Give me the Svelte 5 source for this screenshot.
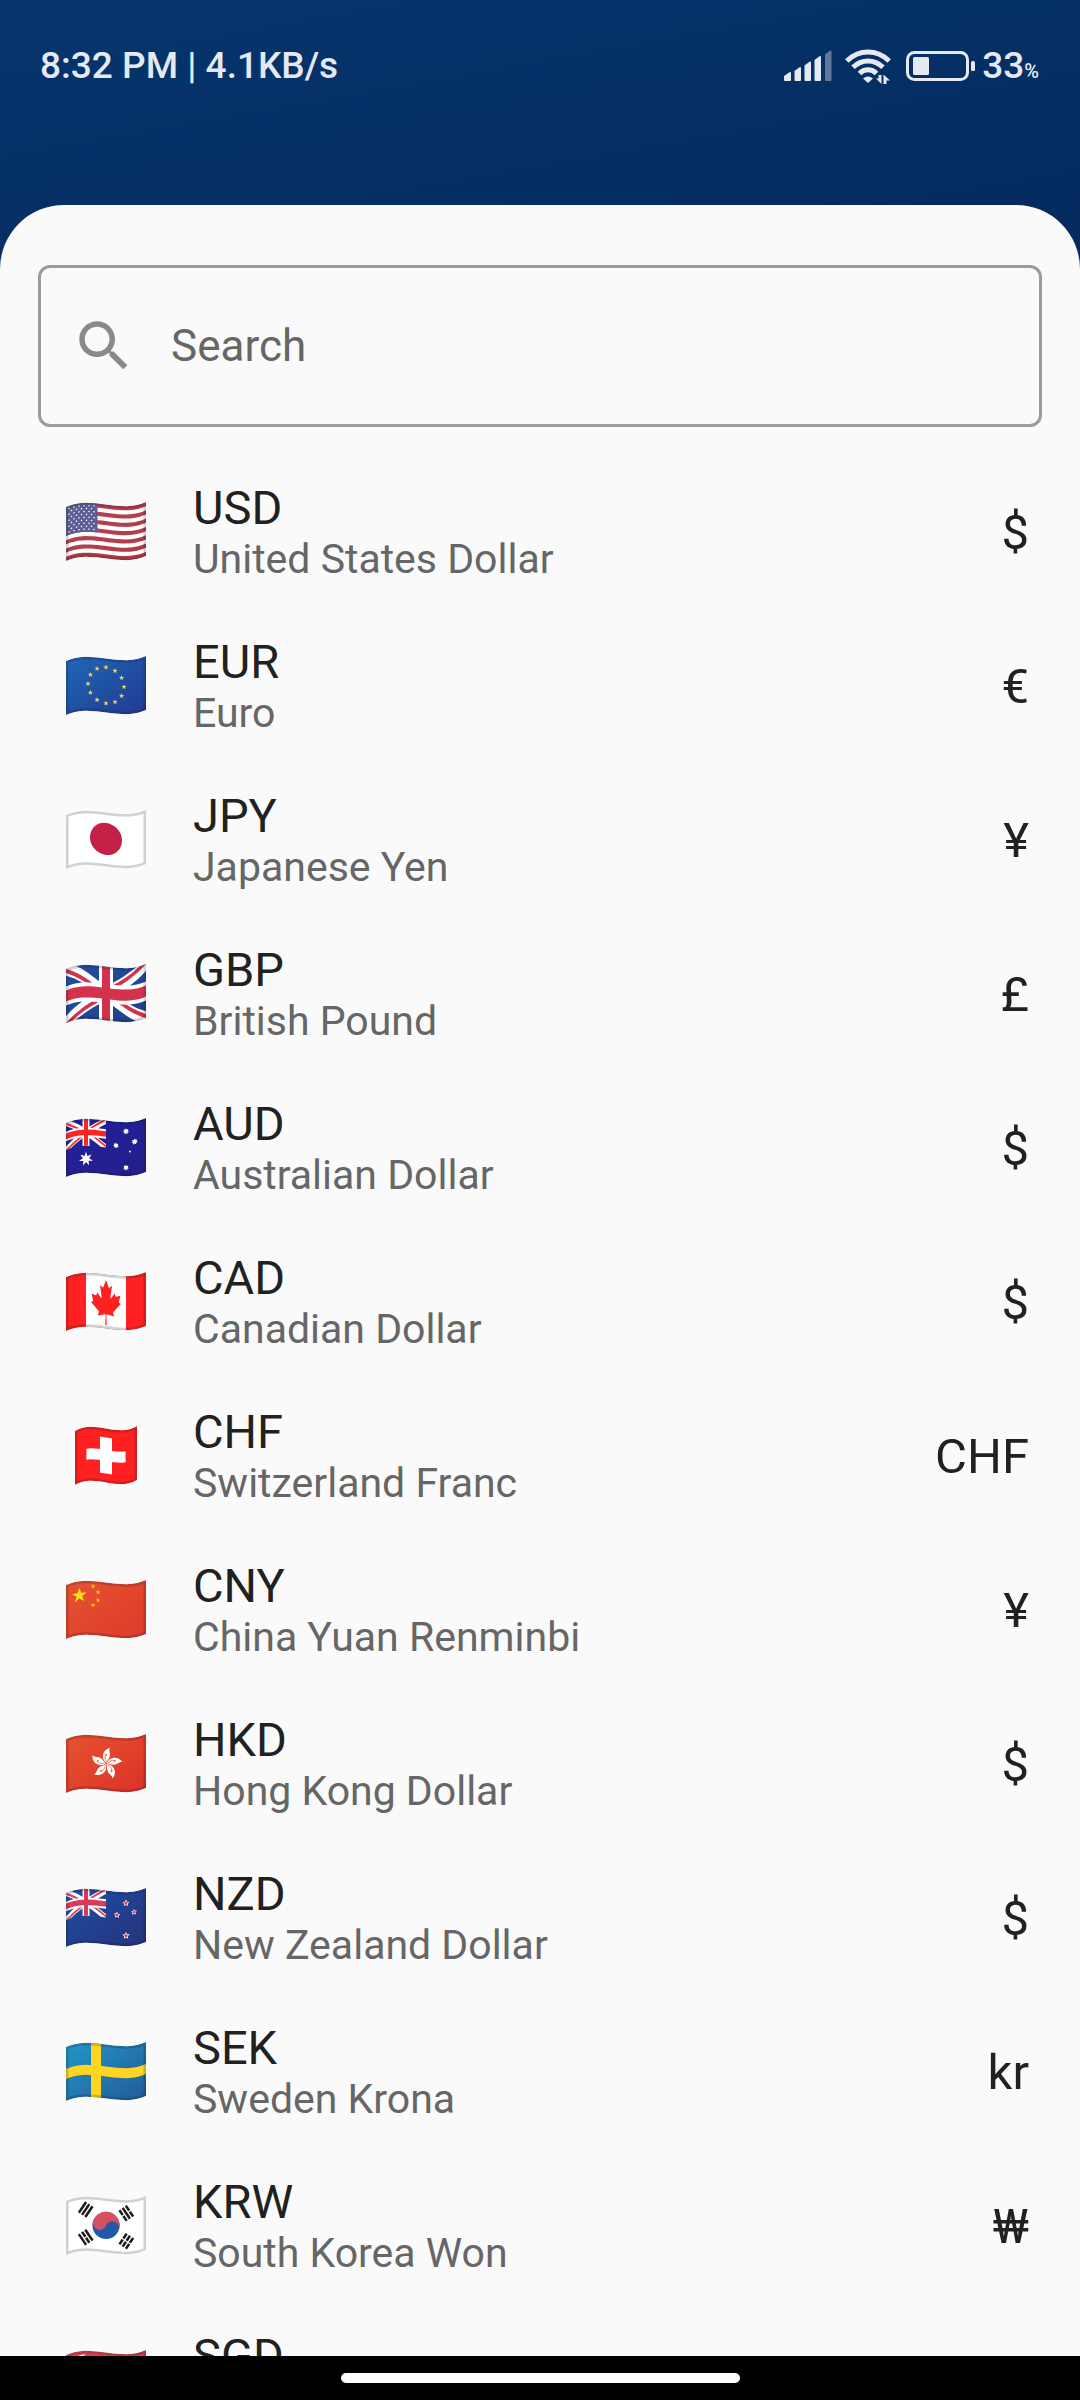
<script>
  const W = 80;
  const H = 54;

  let query = $state('');

  // Height of the cloth's ripple at a share t (0..1) of the flag's width.
  const ripple = (t) => {
    const s = 1 - t;
    return 5 * s * s * s - 21 * s * s * t + 36 * s * t * t;
  };

  // Turns a flat polygon into an outline that follows the ripple.
  function wave(points, left = 0, width = W) {
    const out = [];
    points.forEach(([x1, y1], i) => {
      const [x2, y2] = points[(i + 1) % points.length];
      const steps = Math.max(1, Math.ceil(Math.abs(x2 - x1) / 4));
      for (let k = 0; k < steps; k++) {
        const x = x1 + ((x2 - x1) * k) / steps;
        const y = y1 + ((y2 - y1) * k) / steps;
        const t = Math.min(1, Math.max(0, (x - left) / width));
        out.push(`${x.toFixed(2)},${(y + ripple(t)).toFixed(2)}`);
      }
    });
    return out.join(' ');
  }

  const rect = (x, y, w, h) => [[x, y], [x + w, y], [x + w, y + h], [x, y + h]];

  function star(cx, cy, r, n = 5, inner = 0.4) {
    const pts = [];
    for (let i = 0; i < n * 2; i++) {
      const a = (Math.PI * i) / n - Math.PI / 2;
      const q = i % 2 ? r * inner : r;
      pts.push([cx + q * Math.cos(a), cy + q * Math.sin(a)]);
    }
    return pts;
  }

  const disc = (cx, cy, r) => star(cx, cy, r, 24, 1);
  const shape = (points, fill) => ({ d: wave(points), fill });

  // A band beside the line a-b, between two distances from it.
  function band(a, b, from, to) {
    const dx = b[0] - a[0];
    const dy = b[1] - a[1];
    const len = Math.hypot(dx, dy);
    const nx = -dy / len;
    const ny = dx / len;
    return [
      [a[0] + nx * from, a[1] + ny * from],
      [b[0] + nx * from, b[1] + ny * from],
      [b[0] + nx * to, b[1] + ny * to],
      [a[0] + nx * to, a[1] + ny * to]
    ];
  }

  function unionJack(w, h, red) {
    const c = [w / 2, h / 2];
    const k = h / 54;
    return [
      shape(band([0, 0], [w, h], -5.6 * k, 5.6 * k), '#fff'),
      shape(band([w, 0], [0, h], -5.6 * k, 5.6 * k), '#fff'),
      shape(band([0, 0], c, 0, 3.6 * k), red),
      shape(band([w, h], c, 0, 3.6 * k), red),
      shape(band([w, 0], c, 0, 3.6 * k), red),
      shape(band([0, h], c, 0, 3.6 * k), red),
      shape(rect(w / 2 - 7 * k, 0, 14 * k, h), '#fff'),
      shape(rect(0, h / 2 - 9.5 * k, w, 19 * k), '#fff'),
      shape(rect(w / 2 - 4 * k, 0, 8 * k, h), red),
      shape(rect(0, h / 2 - 5.6 * k, w, 11.2 * k), red)
    ];
  }

  const stripes = Array.from({ length: 6 }, (_, i) =>
    shape(rect(0, (H / 13) * (2 * i + 1), W, H / 13), '#fff')
  );
  const usStars = [];
  for (let r = 0; r < 9; r++) {
    for (let c = 0; c < (r % 2 ? 5 : 6); c++) {
      usStars.push(shape(disc(3 + c * 5 + (r % 2 ? 2.5 : 0), 2.7 + r * 2.95, 0.75), '#fff'));
    }
  }
  const euStars = Array.from({ length: 12 }, (_, i) => {
    const a = (Math.PI * i) / 6;
    return shape(star(40 + 18 * Math.sin(a), 26.8 - 18 * Math.cos(a), 2.8), '#f4d35e');
  });

  const flags = {
    us: { base: ['#b84152', '#b03a4a'], shapes: [...stripes, shape(rect(0, 0, 31.5, 29), '#5d5f94'), ...usStars] },
    eu: { base: ['#1f68b8', '#21398f'], shapes: euStars },
    jp: { base: ['#fff', '#fff'], shapes: [shape(disc(40, 26.4, 16), '#c52148')] },
    gb: { base: ['#1f4fa0', '#223f8c'], shapes: unionJack(W, H, '#d4324c') },
    au: {
      base: ['#22209c', '#241f8a'],
      canton: unionJack(40, 27, '#ff2424'),
      shapes: [
        shape(star(20, 40, 7.2, 7, 0.45), '#fff'),
        shape(star(60, 9.2, 3.2, 7, 0.6), '#fff'),
        shape(star(50, 23.8, 3, 7, 0.6), '#fff'),
        shape(star(68.7, 20.3, 3.2, 7, 0.6), '#fff'),
        shape(star(64, 29.5, 1.6), '#fff'),
        shape(star(60, 45.5, 3, 7, 0.6), '#fff')
      ]
    },
    ca: { base: ['#ff2121', '#ff2121'], shapes: [shape(rect(20, 0, 40, H), '#fff')] },
    ch: {
      base: ['#ff2121', '#ff2121'],
      narrow: true,
      shapes: [
        { d: wave(rect(34, 9, 12, 36), 9, 62), fill: '#fff' },
        { d: wave(rect(20.4, 21.5, 39.2, 11), 9, 62), fill: '#fff' }
      ]
    },
    cn: {
      base: ['#e6532f', '#dc3a2b'],
      shapes: [
        shape(star(13.4, 14, 7.6), '#ffde17'),
        shape(star(27, 5.2, 2.6), '#ffc41a'),
        shape(star(32, 10.7, 2.6), '#ffc41a'),
        shape(star(32, 18.7, 2.6), '#ffc41a'),
        shape(star(27, 24, 2.6), '#ffc41a')
      ]
    },
    hk: { base: ['#e6532f', '#dc3128'], shapes: [] },
    nz: {
      base: ['#1f4fa6', '#25327a'],
      canton: unionJack(40, 27, '#d93a58'),
      shapes: [[60, 11, 3.6], [51, 23.2, 3.4], [68, 20.6, 3.2], [60, 43.5, 3.8]].flatMap(([x, y, r]) => [
        shape(star(x, y, r, 5, 0.5), '#fff'),
        shape(star(x, y, r * 0.7), '#d4324c')
      ])
    },
    se: {
      base: ['#2196c9', '#235a94'],
      shapes: [shape(rect(25, 0, 10, H), '#ffd521'), shape(rect(0, 22, W, 10), '#ffd521')]
    },
    kr: { base: ['#fff', '#fff'], shapes: [] },
    sg: {
      base: ['#df4354', '#d23246'],
      shapes: [
        shape(rect(0, 27, W, 27), '#fff'),
        shape(disc(17, 13.6, 10), '#fff'),
        shape(disc(21, 13.6, 9.5), '#db4050')
      ]
    }
  };

  const cloth = wave(rect(0, 0, W, H));
  const narrowCloth = wave(rect(9, 0, 62, H), 9, 62);
  const cantonCloth = wave(rect(0, 0, 40, 27));

  // Each trigram: centre, slant, and which of its three bars are broken.
  const trigrams = [
    { x: 19.7, y: 13.5, turn: -56, broken: [false, false, false] },
    { x: 60.3, y: 17.3, turn: 56, broken: [true, false, true] },
    { x: 19.7, y: 41.3, turn: 56, broken: [false, true, false] },
    { x: 60.3, y: 45.2, turn: -56, broken: [true, true, true] }
  ];

  const currencies = [
    { code: 'USD', name: 'United States Dollar', symbol: '$', flag: 'us' },
    { code: 'EUR', name: 'Euro', symbol: '€', flag: 'eu' },
    { code: 'JPY', name: 'Japanese Yen', symbol: '¥', flag: 'jp' },
    { code: 'GBP', name: 'British Pound', symbol: '£', flag: 'gb' },
    { code: 'AUD', name: 'Australian Dollar', symbol: '$', flag: 'au' },
    { code: 'CAD', name: 'Canadian Dollar', symbol: '$', flag: 'ca' },
    { code: 'CHF', name: 'Switzerland Franc', symbol: 'CHF', flag: 'ch' },
    { code: 'CNY', name: 'China Yuan Renminbi', symbol: '¥', flag: 'cn' },
    { code: 'HKD', name: 'Hong Kong Dollar', symbol: '$', flag: 'hk' },
    { code: 'NZD', name: 'New Zealand Dollar', symbol: '$', flag: 'nz' },
    { code: 'SEK', name: 'Sweden Krona', symbol: 'kr', flag: 'se' },
    { code: 'KRW', name: 'South Korea Won', symbol: '₩', flag: 'kr' },
    { code: 'SGD', name: 'Singapore Dollar', symbol: '$', flag: 'sg' }
  ];

  const visible = $derived(
    currencies.filter((c) => `${c.code} ${c.name}`.toLowerCase().includes(query.toLowerCase()))
  );
</script>

{#snippet flagIcon(id)}
  {@const f = flags[id]}
  {@const outline = f.narrow ? narrowCloth : cloth}
  <svg class="flag" viewBox="0 0 80 59" aria-hidden="true">
    <defs>
      <linearGradient id="dye-{id}" x1="0" y1="0" x2="1" y2="1">
        <stop offset="0" stop-color={f.base[0]} />
        <stop offset="1" stop-color={f.base[1]} />
      </linearGradient>
      <clipPath id="cloth-{id}"><polygon points={outline} /></clipPath>
      <clipPath id="canton-{id}"><polygon points={cantonCloth} /></clipPath>
    </defs>
    <g clip-path="url(#cloth-{id})">
      <polygon points={outline} fill="url(#dye-{id})" />
      {#if f.canton}
        <g clip-path="url(#canton-{id})">
          {#each f.canton as s}<polygon points={s.d} fill={s.fill} />{/each}
        </g>
      {/if}
      {#each f.shapes as s}<polygon points={s.d} fill={s.fill} />{/each}
      {#if id === 'ca'}
        <path
          fill="#ff2121"
          transform="translate(40 7.6) skewY(4) scale(.008 .0112) translate(-4800 -370)"
          d="M4710 4430l45-863a95 95 0 0 0-111-98l-859 151 116-320a65 65 0 0 0-20-73l-941-762 212-99a65 65 0 0 0 34-79l-186-572 542 115a65 65 0 0 0 73-38l105-247 423 454a65 65 0 0 0 111-57l-204-1052 327 189a65 65 0 0 0 91-27l332-652 332 652a65 65 0 0 0 91 27l327-189-204 1052a65 65 0 0 0 111 57l423-454 105 247a65 65 0 0 0 73 38l542-115-186 572a65 65 0 0 0 34 79l212 99-941 762a65 65 0 0 0-20 73l116 320-859-151a95 95 0 0 0-111 98l45 863z"
        />
      {:else if id === 'hk'}
        {#each [0, 72, 144, 216, 288] as turn}
          <g transform="translate(40.3 29.6) rotate({turn})">
            <path d="M0 -.5C-5.500 -5 -4.500 -13.500 3.600 -15.800C2 -12.500 4.400 -10.500 3.400 -6.800C2.600 -4 .8 -3.200 0 -.5z" fill="#fff" />
            <path d="M0 -2C-2 -4.500 -1.600 -7 -.4 -8.600" fill="none" stroke="#e0432c" stroke-width=".6" />
            <circle cx="0" cy="-9" r=".9" fill="#e0432c" />
          </g>
        {/each}
      {:else if id === 'kr'}
        <g transform="translate(40 29.4) rotate(22)">
          <circle r="13.6" fill="#2159ab" />
          <path d="M-13.6 0A13.6 13.6 0 0 1 13.6 0A6.8 6.8 0 0 0 0 0A6.8 6.8 0 0 1 -13.6 0z" fill="#d8505f" />
        </g>
        {#each trigrams as g}
          <g transform="translate({g.x} {g.y}) rotate({g.turn})" stroke="#1c1c1c" stroke-width="2.5">
            {#each g.broken as cut, i}
              {#if cut}
                <path d="M-6.5 {(i - 1) * 3.9}h5.9M.6 {(i - 1) * 3.9}h5.9" />
              {:else}
                <path d="M-6.5 {(i - 1) * 3.9}h13" />
              {/if}
            {/each}
          </g>
        {/each}
      {/if}
      <polygon points={outline} fill="none" stroke="#1a1a1a" stroke-opacity=".2" stroke-width="5" />
    </g>
  </svg>
{/snippet}

<div class="screen">
  <header class="status">
    <span class="clock">8:32 PM | 4.1KB/s</span>
    <div class="indicators">
      <svg class="signal" viewBox="0 0 48 32" aria-hidden="true">
        <path d="M0 26l5.5-3.800q1.500-.5 1.500 1V30q0 1-1 1H1q-1 0-1-1z" />
        <path d="M10.500 21l5-3.800q1.500-.7 1.500 1V30q0 1-1 1h-4.500q-1 0-1-1z" />
        <path d="M20.500 15.500l5-3.800q1.500-.7 1.500 1V30q0 1-1 1h-4.500q-1 0-1-1z" />
        <path d="M30.500 10l5-3.800q1.500-.7 1.500 1V30q0 1-1 1h-4.500q-1 0-1-1z" />
        <path opacity=".4" d="M41 4.500l5-3.800q1.500-.7 1.500 1V30q0 1-1 1H42q-1 0-1-1z" />
      </svg>
      <svg class="wifi" viewBox="0 0 46 36" aria-hidden="true">
        <g fill="none" stroke="currentColor" stroke-width="5">
          <path d="M1.800 13Q11 4 23 4T44.200 13" />
          <path d="M8 19.300Q14.500 13 23 13T38 19.300" />
          <path d="M14.500 25.500Q18 21.800 23 21.800T31.500 25.500" />
        </g>
        <path d="M18 30.500Q23 26.500 28 30.500L23 35z" />
        <path d="M33.500 27h3v9l-5.500-5.500h2.500zM38.500 36V26.500l6.500 6h-3.500V36z" />
      </svg>
      <svg class="battery" viewBox="0 0 70 32" aria-hidden="true">
        <rect x="1.500" y="2.500" width="60" height="27" rx="7" fill="none" stroke="currentColor" stroke-width="3" />
        <rect x="7" y="7" width="16" height="18" rx="1.500" />
        <rect x="65" y="11" width="4" height="10" rx="1.500" />
      </svg>
      <span class="charge">33<small>%</small></span>
    </div>
  </header>

  <main class="sheet">
    <label class="search">
      <svg viewBox="0 0 24 24" aria-hidden="true">
        <path d="M15.500 14h-.79l-.28-.27C15.410 12.590 16 11.110 16 9.500 16 5.910 13.090 3 9.500 3S3 5.910 3 9.500 5.910 16 9.500 16c1.610 0 3.090-.59 4.230-1.570l.27.28v.79l5 4.990L20.490 19l-4.990-5zm-6 0C7.010 14 5 11.990 5 9.500S7.010 5 9.500 5 14 7.010 14 9.500 11.990 14 9.500 14z" />
      </svg>
      <input type="text" placeholder="Search" aria-label="Search" bind:value={query} />
    </label>

    <ul class="list">
      {#each visible as c (c.code)}
        <li>
          <button type="button" class="row">
            {@render flagIcon(c.flag)}
            <span class="label">
              <span class="code">{c.code}</span>
              <span class="name">{c.name}</span>
            </span>
            <span class="symbol">{c.symbol}</span>
          </button>
        </li>
      {/each}
    </ul>
  </main>

  <footer class="home"><span class="pill"></span></footer>
</div>

<style>
  :global(body) {
    margin: 0;
    background: #000;
  }

  .screen {
    display: flex;
    flex-direction: column;
    height: 100vh;
    overflow: hidden;
    font-family: Roboto, 'Noto Sans', sans-serif;
    background: linear-gradient(170deg, #06356d 0, #042a5e 420px);
  }

  .status {
    display: flex;
    justify-content: space-between;
    align-items: center;
    flex: none;
    padding: 44px 41px 117px 40px;
    color: #e4e9f2;
    font-size: 37px;
    font-weight: 500;
    line-height: 44px;
  }

  .indicators {
    display: flex;
    align-items: center;
  }

  .indicators svg {
    fill: currentColor;
  }

  .signal {
    width: 48px;
    height: 32px;
    margin-right: 13px;
  }

  .wifi {
    width: 46px;
    height: 36px;
    margin-right: 15px;
  }

  .battery {
    width: 70px;
    height: 32px;
    margin-right: 6px;
  }

  .charge small {
    font-size: 20px;
    line-height: 20px;
  }

  .sheet {
    display: flex;
    flex-direction: column;
    flex: 1;
    min-height: 0;
    overflow: hidden;
    background: #fafafa;
    border-radius: 64px 64px 0 0;
  }

  .search {
    display: flex;
    align-items: center;
    gap: 34px;
    flex: none;
    box-sizing: border-box;
    height: 162px;
    margin: 60px 38px 0;
    padding: 0 30px;
    border: 3px solid #9b9b9b;
    border-radius: 12px;
  }

  .search svg {
    flex: none;
    width: 66px;
    height: 66px;
    fill: #8a8a8a;
  }

  .search input {
    flex: 1;
    min-width: 0;
    padding: 0;
    border: 0;
    outline: 0;
    background: none;
    color: #212121;
    font: 44px/56px Roboto, 'Noto Sans', sans-serif;
  }

  .search input::placeholder {
    color: #666;
    opacity: 1;
  }

  .list {
    flex: 1;
    min-height: 0;
    margin: 27px 0 0;
    padding: 0;
    overflow: hidden;
    list-style: none;
  }

  .row {
    display: flex;
    align-items: center;
    width: 100%;
    height: 154px;
    padding: 0 51px 0 66px;
    border: 0;
    background: none;
    color: #212121;
    font-family: inherit;
    text-align: left;
  }

  .flag {
    flex: none;
    width: 80px;
    height: 59px;
    margin-right: 47px;
  }

  .label {
    display: flex;
    flex-direction: column;
    flex: 1;
  }

  .code {
    font-size: 47px;
    line-height: 55px;
  }

  .name {
    color: #666;
    font-size: 41px;
    line-height: 48px;
  }

  .symbol {
    padding-top: 4px;
    font-size: 49px;
    line-height: 60px;
  }

  .home {
    display: flex;
    justify-content: center;
    align-items: center;
    flex: none;
    height: 44px;
    background: #000;
  }

  .pill {
    width: 399px;
    height: 10px;
    border-radius: 5px;
    background: #fff;
  }
</style>
